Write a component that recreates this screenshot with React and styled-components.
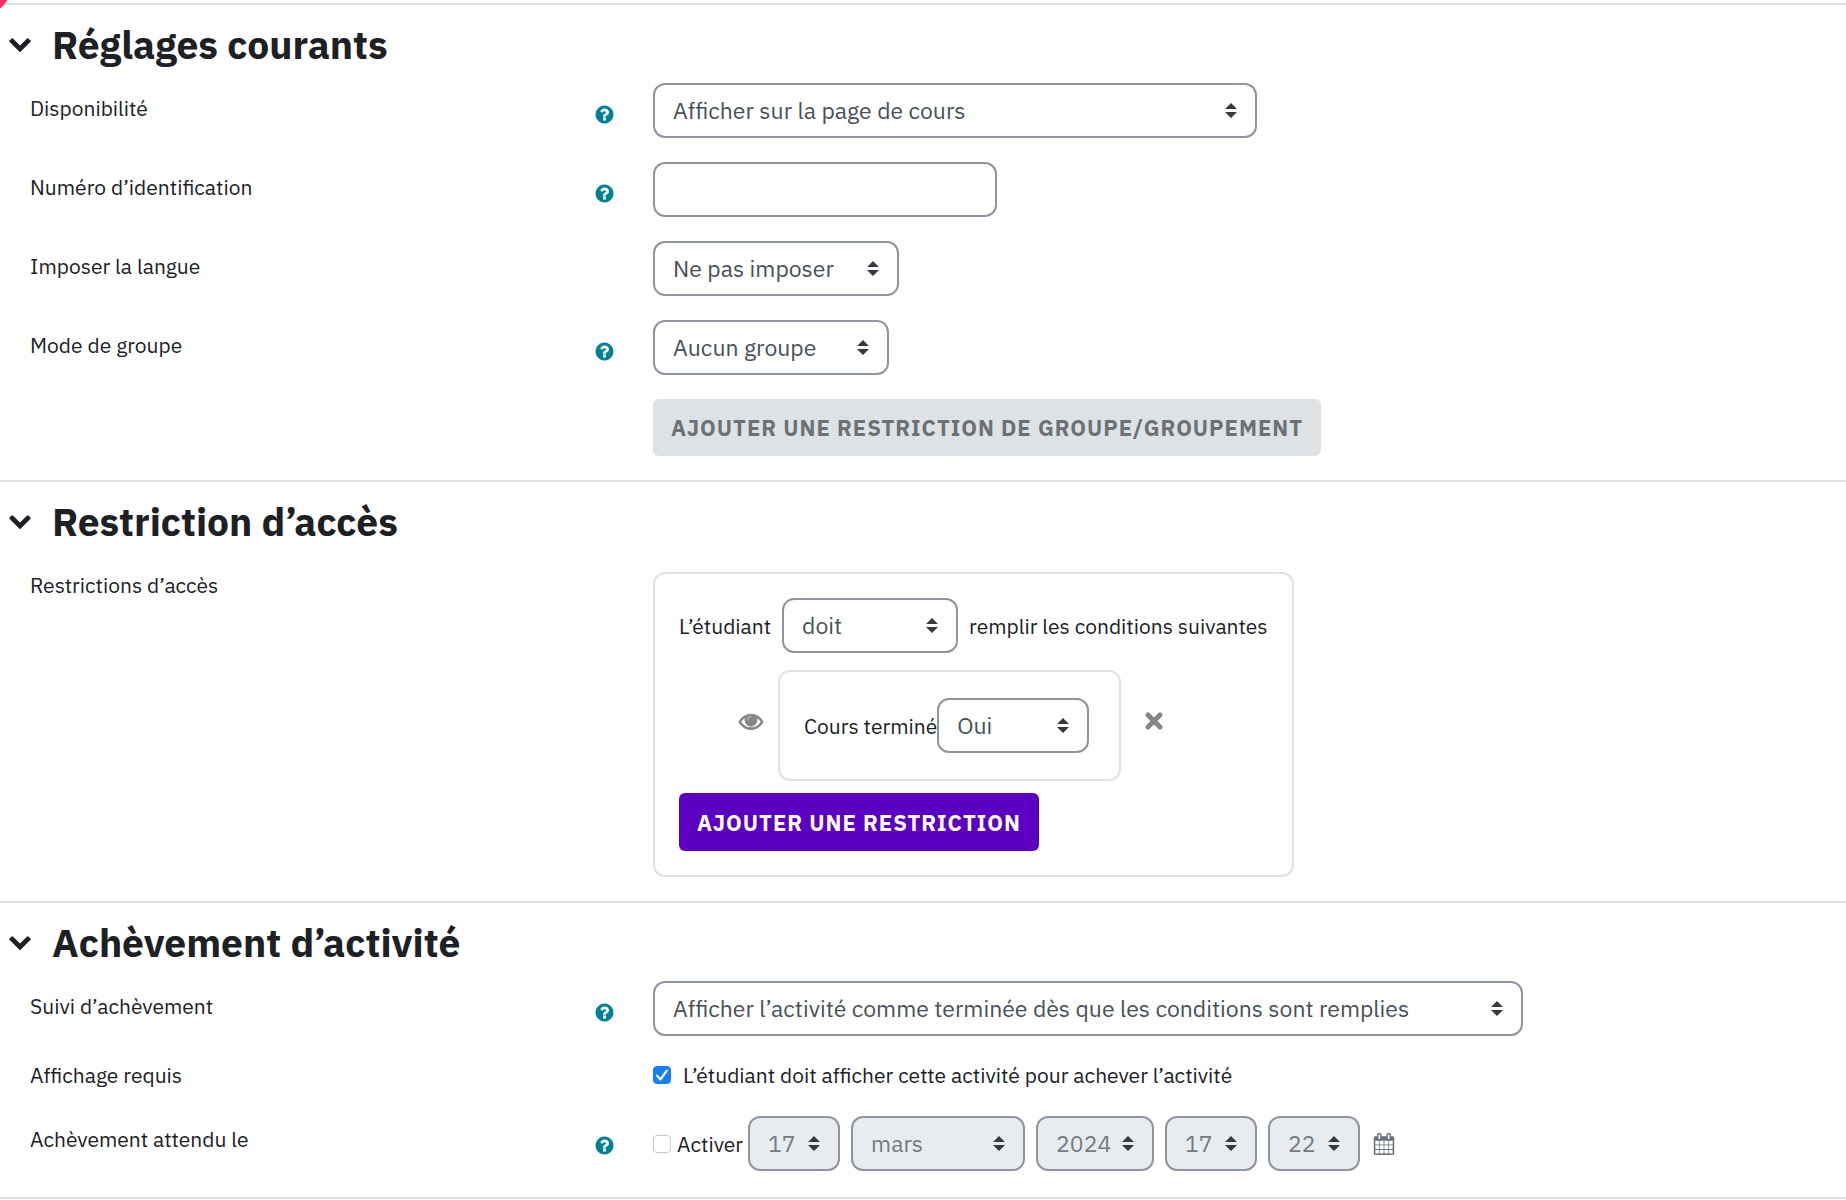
import React, { useState } from "react";
import styled, { createGlobalStyle } from "styled-components";

const GlobalStyle = createGlobalStyle`
  *, *::before, *::after {
    box-sizing: border-box;
  }

  body {
    margin: 0;
    background: #fff;
    color: #1d2125;
    font-family: "IBM Plex Sans", Roboto, "Liberation Sans", sans-serif;
    font-size: 21px;
    line-height: 30px;
  }

  button, input, select {
    font-family: inherit;
  }
`;

const Form = styled.form`
  padding-top: 3px;
`;

const CornerBadge = styled.span`
  position: absolute;
  top: -27px;
  left: -29px;
  width: 38px;
  height: 38px;
  border-radius: 50%;
  background: #ff2d66;
`;

const SectionBox = styled.section`
  border-top: 2px solid #dee2e6;
  padding: 16px 0 24px;
`;

const SectionHeader = styled.div`
  display: flex;
  align-items: center;
  gap: 20px;
  padding-left: 8px;
`;

const Toggle = styled.button`
  display: flex;
  padding: 0 0 4px;
  border: none;
  background: none;
  color: inherit;
  cursor: pointer;
`;

const Title = styled.h3`
  margin: 0;
  font-size: 39px;
  font-weight: 700;
  line-height: 48px;
`;

const SectionBody = styled.div`
  display: flex;
  flex-direction: column;
  gap: 24px;
  padding: 14px 0 0 30px;
`;

const Row = styled.div`
  display: grid;
  grid-template-columns: minmax(200px, 585px) minmax(0, 1fr);
  column-gap: 38px;
`;

const LabelCell = styled.div`
  display: flex;
  align-items: flex-start;
  justify-content: space-between;
  padding-top: ${(props) => (props.$compact ? "0" : "10px")};
`;

const HelpButton = styled.button`
  display: flex;
  padding: 11px 0 0;
  border: none;
  background: none;
  color: #008196;
  cursor: pointer;
`;

const Field = styled.div`
  display: flex;
  flex-wrap: wrap;
  align-items: center;
  justify-content: flex-start;
`;

const SelectBox = styled.span`
  display: inline-grid;
  align-items: center;
  width: ${(props) => props.$width}px;
  max-width: 100%;

  & > * {
    grid-area: 1 / 1;
  }

  & > svg {
    justify-self: end;
    margin-right: 20px;
    pointer-events: none;
  }
`;

const SelectInput = styled.select`
  appearance: none;
  width: 100%;
  height: 55px;
  padding: 0 36px 2px 18px;
  border: 2px solid #8f959e;
  border-radius: 12px;
  background: #fff;
  color: #495057;
  font-size: 23px;

  &:disabled {
    background: #e9ecef;
    color: #757b81;
    opacity: 1;
  }
`;

const TextInput = styled.input`
  width: 344px;
  max-width: 100%;
  height: 55px;
  padding: 0 18px;
  border: 2px solid #8f959e;
  border-radius: 12px;
  color: #495057;
  font-size: 23px;
`;

const Button = styled.button`
  height: 58px;
  padding: 0 18px;
  border: none;
  border-radius: 6px;
  background: #5b00c2;
  color: #fff;
  font-size: 22px;
  font-weight: 700;
  letter-spacing: 1px;
  text-transform: uppercase;
  cursor: pointer;

  &:disabled {
    height: 57px;
    background: #dfe2e5;
    color: #6d7175;
    cursor: default;
  }
`;

const Panel = styled.div`
  display: flex;
  flex-direction: column;
  align-items: flex-start;
  max-width: 100%;
  margin-top: 12px;
  padding: 24px;
  border: 2px solid #dee2e6;
  border-radius: 12px;
`;

const Sentence = styled.div`
  display: flex;
  align-items: center;
  gap: 11px;
  white-space: nowrap;
`;

const Condition = styled.div`
  display: flex;
  align-items: center;
  gap: 15px;
  margin: 17px 0 12px;
  padding-left: 60px;
`;

const ConditionCard = styled.div`
  display: flex;
  align-items: center;
  width: 343px;
  height: 111px;
  padding: 0 24px;
  border: 2px solid #dee2e6;
  border-radius: 12px;
`;

const IconButton = styled.button`
  display: flex;
  padding: 0 0 10px;
  border: none;
  background: none;
  color: #868686;
  cursor: pointer;
`;

const RemoveButton = styled(IconButton)`
  padding-left: 8px;
`;

const CheckLine = styled.div`
  display: flex;
  align-items: center;
  gap: ${(props) => props.$gap}px;
`;

const CheckBox = styled.span`
  display: inline-grid;
  place-items: center;

  & > * {
    grid-area: 1 / 1;
  }

  & > svg {
    pointer-events: none;
  }
`;

const CheckInput = styled.input`
  appearance: none;
  width: 18px;
  height: 18px;
  margin: 0;
  border: 1px solid #c8c8c8;
  border-radius: 4px;
  background: #fff;

  &:checked {
    border-color: #147efb;
    background: #147efb;
  }
`;

const DateLine = styled.div`
  display: flex;
  flex-wrap: wrap;
  align-items: center;
  gap: 11px;
  padding: 2px 0;
`;

const DateStart = styled.div`
  display: flex;
  align-items: center;
  gap: 5px;
`;

const CalendarLink = styled.a`
  display: flex;
  margin-left: 2px;
  color: #6a737b;
`;

const Icon = ({ path, size, weight = 0 }) => (
  <svg
    width={size}
    height={size}
    viewBox="0 0 1792 1792"
    fill="currentColor"
    stroke={weight ? "currentColor" : "none"}
    strokeWidth={weight}
    overflow="visible"
    aria-hidden="true"
  >
    <path d={path} />
  </svg>
);

const icons = {
  chevron:
    "M1683 808l-742 741q-19 19-45 19t-45-19l-742-741q-19-19-19-45.5t19-45.5l166-165q19-19 45-19t45 19l531 531 531-531q19-19 45-19t45 19l166 165q19 19 19 45.5t-19 45.5z",
  help:
    "M1024 1376v-192q0-14-9-23t-23-9h-192q-14 0-23 9t-9 23v192q0 14 9 23t23 9h192q14 0 23-9t9-23zm256-672q0-88-55.5-163t-138.5-116-170-41q-243 0-371 213-15 24 8 42l132 100q7 6 19 6 16 0 25-12 53-68 86-92 34-24 86-24 48 0 85.5 26t37.5 59q0 38-20 61t-68 45q-63 28-115.5 86.5t-52.5 125.5v36q0 14 9 23t23 9h192q14 0 23-9t9-23q0-19 21.5-49.5t54.5-49.5q32-18 49-28.5t46-35 44.5-48 28-60.5 12.5-81zm384 192q0 209-103 385.5t-279.5 279.5-385.5 103-385.5-103-279.5-279.5-103-385.5 103-385.5 279.5-279.5 385.5-103 385.5 103 279.5 279.5 103 385.5z",
  eye:
    "M1664 960q-152-236-381-353 61 104 61 225 0 185-131.5 316.5t-316.5 131.5-316.5-131.5-131.5-316.5q0-121 61-225-229 117-381 353 133 205 333.5 326.5t434.5 121.5 434.5-121.5 333.5-326.5zm-720-384q0-20-14-34t-34-14q-125 0-214.5 89.5t-89.5 214.5q0 20 14 34t34 14 34-14 14-34q0-86 61-147t147-61q20 0 34-14t14-34zm848 384q0 34-20 69-140 230-376.5 368.5t-499.5 138.5-499.5-139-376.5-368q-20-35-20-69t20-69q140-229 376.5-368t499.5-139 499.5 139 376.5 368q20 35 20 69z",
  calendar:
    "M192 1664h288v-288h-288v288zm352 0h320v-288h-320v288zm-352-352h288v-320h-288v320zm352 0h320v-320h-320v320zm-352-384h288v-288h-288v288zm736 736h320v-288h-320v288zm-384-736h320v-288h-320v288zm768 736h288v-288h-288v288zm-384-352h320v-320h-320v320zm-352-864v-288q0-13-9.5-22.5t-22.5-9.5h-64q-13 0-22.5 9.5t-9.5 22.5v288q0 13 9.5 22.5t22.5 9.5h64q13 0 22.5-9.5t9.5-22.5zm736 864h288v-320h-288v320zm-384-384h320v-288h-320v288zm384 0h288v-288h-288v288zm32-480v-288q0-13-9.5-22.5t-22.5-9.5h-64q-13 0-22.5 9.5t-9.5 22.5v288q0 13 9.5 22.5t22.5 9.5h64q13 0 22.5-9.5t9.5-22.5zm384-64v1280q0 52-38 90t-90 38h-1408q-52 0-90-38t-38-90v-1280q0-52 38-90t90-38h128v-96q0-66 47-113t113-47h64q66 0 113 47t47 113v96h384v-96q0-66 47-113t113-47h64q66 0 113 47t47 113v96h128q52 0 90 38t38 90z",
};

const Select = ({ options, width, ...rest }) => (
  <SelectBox $width={width}>
    <SelectInput {...rest}>
      {options.map((option) => (
        <option key={option}>{option}</option>
      ))}
    </SelectInput>
    <svg width="12" height="15" viewBox="0 0 4 5" fill="#343a40" aria-hidden="true">
      <path d="M2 0L0 2h4zm0 5L0 3h4z" />
    </svg>
  </SelectBox>
);

const Checkbox = ({ checked, ...rest }) => (
  <CheckBox>
    <CheckInput type="checkbox" checked={checked} {...rest} />
    {checked && (
      <svg width="18" height="18" viewBox="0 0 18 18" fill="none" stroke="#fff" aria-hidden="true">
        <path d="M4 9.6l3.4 3.9L13.8 4.6" strokeWidth="2.2" strokeLinecap="round" strokeLinejoin="round" />
      </svg>
    )}
  </CheckBox>
);

const Section = ({ title, children }) => {
  const [open, setOpen] = useState(true);

  return (
    <SectionBox>
      <SectionHeader>
        <Toggle
          type="button"
          aria-label={title}
          aria-expanded={open}
          onClick={() => setOpen(!open)}
        >
          <Icon path={icons.chevron} size={24} />
        </Toggle>
        <Title>{title}</Title>
      </SectionHeader>
      {open && <SectionBody>{children}</SectionBody>}
    </SectionBox>
  );
};

const FormRow = ({ label, htmlFor, help, compact, children }) => (
  <Row>
    <LabelCell $compact={compact}>
      {htmlFor ? <label htmlFor={htmlFor}>{label}</label> : <span>{label}</span>}
      {help && (
        <HelpButton type="button" aria-label={`Aide sur ${label}`}>
          <Icon path={icons.help} size={21} />
        </HelpButton>
      )}
    </LabelCell>
    <Field>{children}</Field>
  </Row>
);

const App = () => {
  const [viewRequired, setViewRequired] = useState(true);
  const [dateEnabled, setDateEnabled] = useState(false);

  return (
    <Form onSubmit={(e) => e.preventDefault()}>
      <GlobalStyle />
      <CornerBadge />

      <Section title="Réglages courants">
        <FormRow label="Disponibilité" htmlFor="visible" help>
          <Select
            id="visible"
            width={604}
            options={["Afficher sur la page de cours", "Cacher sur la page de cours"]}
          />
        </FormRow>
        <FormRow label="Numéro d’identification" htmlFor="idnumber" help>
          <TextInput id="idnumber" type="text" />
        </FormRow>
        <FormRow label="Imposer la langue" htmlFor="lang">
          <Select id="lang" width={246} options={["Ne pas imposer", "Français"]} />
        </FormRow>
        <FormRow label="Mode de groupe" htmlFor="groupmode" help>
          <Select
            id="groupmode"
            width={236}
            options={["Aucun groupe", "Groupes séparés"]}
          />
        </FormRow>
        <FormRow>
          <Button type="button" disabled>
            Ajouter une restriction de groupe/groupement
          </Button>
        </FormRow>
      </Section>

      <Section title="Restriction d’accès">
        <FormRow label="Restrictions d’accès">
          <Panel>
            <Sentence>
              <label htmlFor="must">L’étudiant</label>
              <Select id="must" width={176} options={["doit", "ne doit pas"]} />
              <span>remplir les conditions suivantes</span>
            </Sentence>
            <Condition>
              <IconButton type="button" aria-label="Masquer la condition">
                <Icon path={icons.eye} size={24} weight={70} />
              </IconButton>
              <ConditionCard>
                <label htmlFor="completed">Cours terminé</label>
                <Select id="completed" width={152} options={["Oui", "Non"]} />
              </ConditionCard>
              <RemoveButton type="button" aria-label="Supprimer la condition">
                <svg width="20" height="20" viewBox="0 0 20 20" stroke="currentColor" aria-hidden="true">
                  <path d="M4 4l12 12M16 4L4 16" strokeWidth="5" strokeLinecap="round" />
                </svg>
              </RemoveButton>
            </Condition>
            <Button type="button">Ajouter une restriction</Button>
          </Panel>
        </FormRow>
      </Section>

      <Section title="Achèvement d’activité">
        <FormRow label="Suivi d’achèvement" htmlFor="completion" help>
          <Select
            id="completion"
            width={870}
            options={[
              "Afficher l’activité comme terminée dès que les conditions sont remplies",
              "Ne pas afficher l’état d’achèvement",
            ]}
          />
        </FormRow>
        <FormRow label="Affichage requis" compact>
          <CheckLine $gap={12}>
            <Checkbox
              id="completionview"
              checked={viewRequired}
              onChange={(e) => setViewRequired(e.target.checked)}
            />
            <label htmlFor="completionview">
              L’étudiant doit afficher cette activité pour achever l’activité
            </label>
          </CheckLine>
        </FormRow>
        <FormRow label="Achèvement attendu le" help>
          <DateLine>
            <DateStart>
              <CheckLine $gap={6}>
                <Checkbox
                  id="dateenabled"
                  checked={dateEnabled}
                  onChange={(e) => setDateEnabled(e.target.checked)}
                />
                <label htmlFor="dateenabled">Activer</label>
              </CheckLine>
              <Select aria-label="Jour" width={92} options={["17"]} disabled={!dateEnabled} />
            </DateStart>
            <Select aria-label="Mois" width={174} options={["mars"]} disabled={!dateEnabled} />
            <Select aria-label="Année" width={118} options={["2024"]} disabled={!dateEnabled} />
            <Select aria-label="Heure" width={92} options={["17"]} disabled={!dateEnabled} />
            <Select aria-label="Minute" width={92} options={["22"]} disabled={!dateEnabled} />
            <CalendarLink href="#calendrier" aria-label="Calendrier">
              <Icon path={icons.calendar} size={22} />
            </CalendarLink>
          </DateLine>
        </FormRow>
      </Section>

      <SectionBox />
    </Form>
  );
};

export default App;
